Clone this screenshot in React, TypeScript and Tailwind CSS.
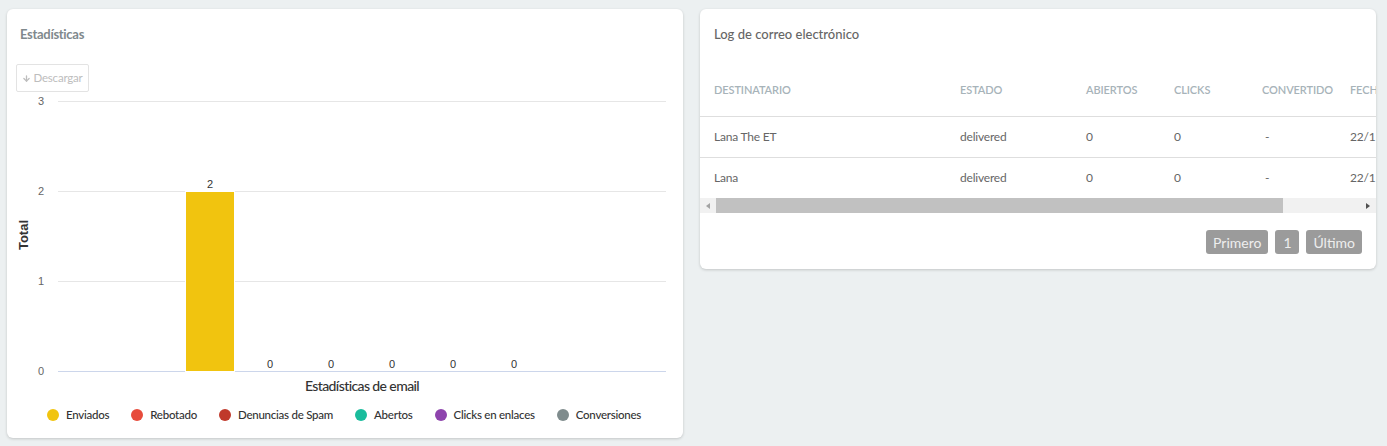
import { ArrowDown } from 'lucide-react'

const legend = [
  { label: 'Enviados', color: '#f1c40f' },
  { label: 'Rebotado', color: '#e74c3c' },
  { label: 'Denuncias de Spam', color: '#c0392b' },
  { label: 'Abertos', color: '#1abc9c' },
  { label: 'Clicks en enlaces', color: '#8e44ad' },
  { label: 'Conversiones', color: '#7f8c8d' },
]

const rows = [
  { name: 'Lana The ET', status: 'delivered', opened: '0', clicks: '0', converted: '-', date: '22/11/2023' },
  { name: 'Lana', status: 'delivered', opened: '0', clicks: '0', converted: '-', date: '22/11/2023' },
]

function StatsChart() {
  const ticks = [3, 2, 1, 0]
  const zeros = [263, 324, 385, 446, 507]
  return (
    <svg width={676} height={308} viewBox="0 0 676 308" className="block">
      {ticks.map((t, i) => {
        const y = 9 + i * 90
        return (
          <g key={t}>
            <line x1={51} x2={659} y1={y + 0.5} y2={y + 0.5} stroke={t === 0 ? '#ccd6eb' : '#e6e6e6'} strokeWidth={1} />
            <text x={37} y={y + 4} textAnchor="end" fontSize={11} fill="#666" fontFamily="'Liberation Sans', Arial, sans-serif">
              {t}
            </text>
          </g>
        )
      })}
      <text
        transform="translate(21 143) rotate(-90)"
        textAnchor="middle"
        fontSize={13}
        fontWeight="bold"
        fill="#333"
        fontFamily="'Liberation Sans', Arial, sans-serif"
      >
        Total
      </text>
      {/* Enviados bar */}
      <rect x={178.5} y={99.5} width={49} height={180} fill="#f1c40f" stroke="#fff" strokeWidth={1} />
      <text x={203} y={96} textAnchor="middle" fontSize={11} fill="#333" fontFamily="'Liberation Sans', Arial, sans-serif">
        2
      </text>
      {zeros.map((x) => (
        <text key={x} x={x} y={276} textAnchor="middle" fontSize={11} fill="#333" fontFamily="'Liberation Sans', Arial, sans-serif">
          0
        </text>
      ))}
      <text
        x={355}
        y={299}
        textAnchor="middle"
        fontSize={14}
        fontWeight={500}
        letterSpacing={-0.6}
        fill="#333"
        fontFamily="Lato, 'Liberation Sans', sans-serif"
      >
        Estadísticas de email
      </text>
    </svg>
  )
}

function StatsCard() {
  return (
    <div className="w-[676px] h-[429px] shrink-0 bg-white rounded-[6px] shadow-[0_1px_3px_rgba(0,0,0,0.18)] flex flex-col">
      <div className="h-[52px] flex items-center pl-[13px]">
        <span className="text-[13px] font-bold tracking-[-0.3px] text-[#7f898d]">Estadísticas</span>
      </div>
      <div className="mt-[3px] pl-[9px]">
        <button className="h-[28px] w-[73px] flex items-center justify-center gap-[2px] border border-[#e3e3e3] rounded-[2px] text-[11.5px] tracking-[-0.2px] text-[#bdbdbd] bg-white">
          <ArrowDown size={9} strokeWidth={3.5} />
          Descargar
        </button>
      </div>
      <StatsChart />
      <div className="h-[30px] flex items-center justify-center gap-[22px] pr-[2px]">
        {legend.map((l) => (
          <div key={l.label} className="flex items-center gap-[7px]">
            <span className="w-[12px] h-[12px] rounded-full" style={{ backgroundColor: l.color }} />
            <span className="text-[11.5px] font-medium tracking-[-0.25px] text-[#333]">{l.label}</span>
          </div>
        ))}
      </div>
    </div>
  )
}

function Scrollbar() {
  return (
    <div className="h-[15px] bg-[#f1f1f1] flex items-center">
      <div className="w-[16px] flex justify-center">
        <span className="w-0 h-0 border-y-[3px] border-y-transparent border-r-[4px] border-r-[#a3a3a3]" />
      </div>
      <div className="w-[567px] h-[15px] bg-[#c1c1c1]" />
      <div className="flex-1" />
      <div className="w-[16px] flex justify-center">
        <span className="w-0 h-0 border-y-[3px] border-y-transparent border-l-[4px] border-l-[#505050]" />
      </div>
    </div>
  )
}

function EmailLogCard() {
  const grid = 'grid grid-cols-[246px_126px_88px_88px_88px_100px] pl-[14px] w-max'
  return (
    <div className="w-[676px] h-[260px] shrink-0 bg-white rounded-[6px] shadow-[0_1px_3px_rgba(0,0,0,0.18)] flex flex-col overflow-hidden">
      <div className="h-[52px] flex items-center pl-[14px]">
        <span className="text-[13px] font-medium text-[#666]">Log de correo electrónico</span>
      </div>
      <div className="overflow-hidden">
        <div className={`${grid} h-[55px] pt-[3px] items-center text-[11px] font-semibold uppercase tracking-[-0.1px] text-[#a7b3b9]`}>
          <span>Destinatario</span>
          <span>Estado</span>
          <span>Abiertos</span>
          <span>Clicks</span>
          <span>Convertido</span>
          <span>Fecha</span>
        </div>
        {rows.map((r) => (
          <div key={r.name} className={`${grid} h-[41px] pb-[1px] items-center border-t border-[#dedede] text-[12px] tracking-[-0.2px] text-[#666]`}>
            <span>{r.name}</span>
            <span>{r.status}</span>
            <span>{r.opened}</span>
            <span>{r.clicks}</span>
            <span className="pl-[3px]">{r.converted}</span>
            <span>{r.date}</span>
          </div>
        ))}
      </div>
      <Scrollbar />
      <div className="mt-[17px] flex justify-end gap-[7px] pr-[14px]">
        <button className="h-[24px] px-[7px] rounded-[3px] bg-[#9b9b9b] text-[14px] text-[#eeeeee]">Primero</button>
        <button className="h-[24px] w-[24px] rounded-[3px] bg-[#9b9b9b] text-[14px] text-[#eeeeee]">1</button>
        <button className="h-[24px] px-[7px] rounded-[3px] bg-[#9b9b9b] text-[14px] text-[#eeeeee]">Último</button>
      </div>
    </div>
  )
}

export default function App() {
  return (
    <div className="w-[1387px] h-[446px] bg-[#ecf0f1] pt-[9px] pl-[7px] font-['Lato','Liberation_Sans',sans-serif]">
      <div className="flex items-start gap-[17px]">
        <StatsCard />
        <EmailLogCard />
      </div>
    </div>
  )
}
